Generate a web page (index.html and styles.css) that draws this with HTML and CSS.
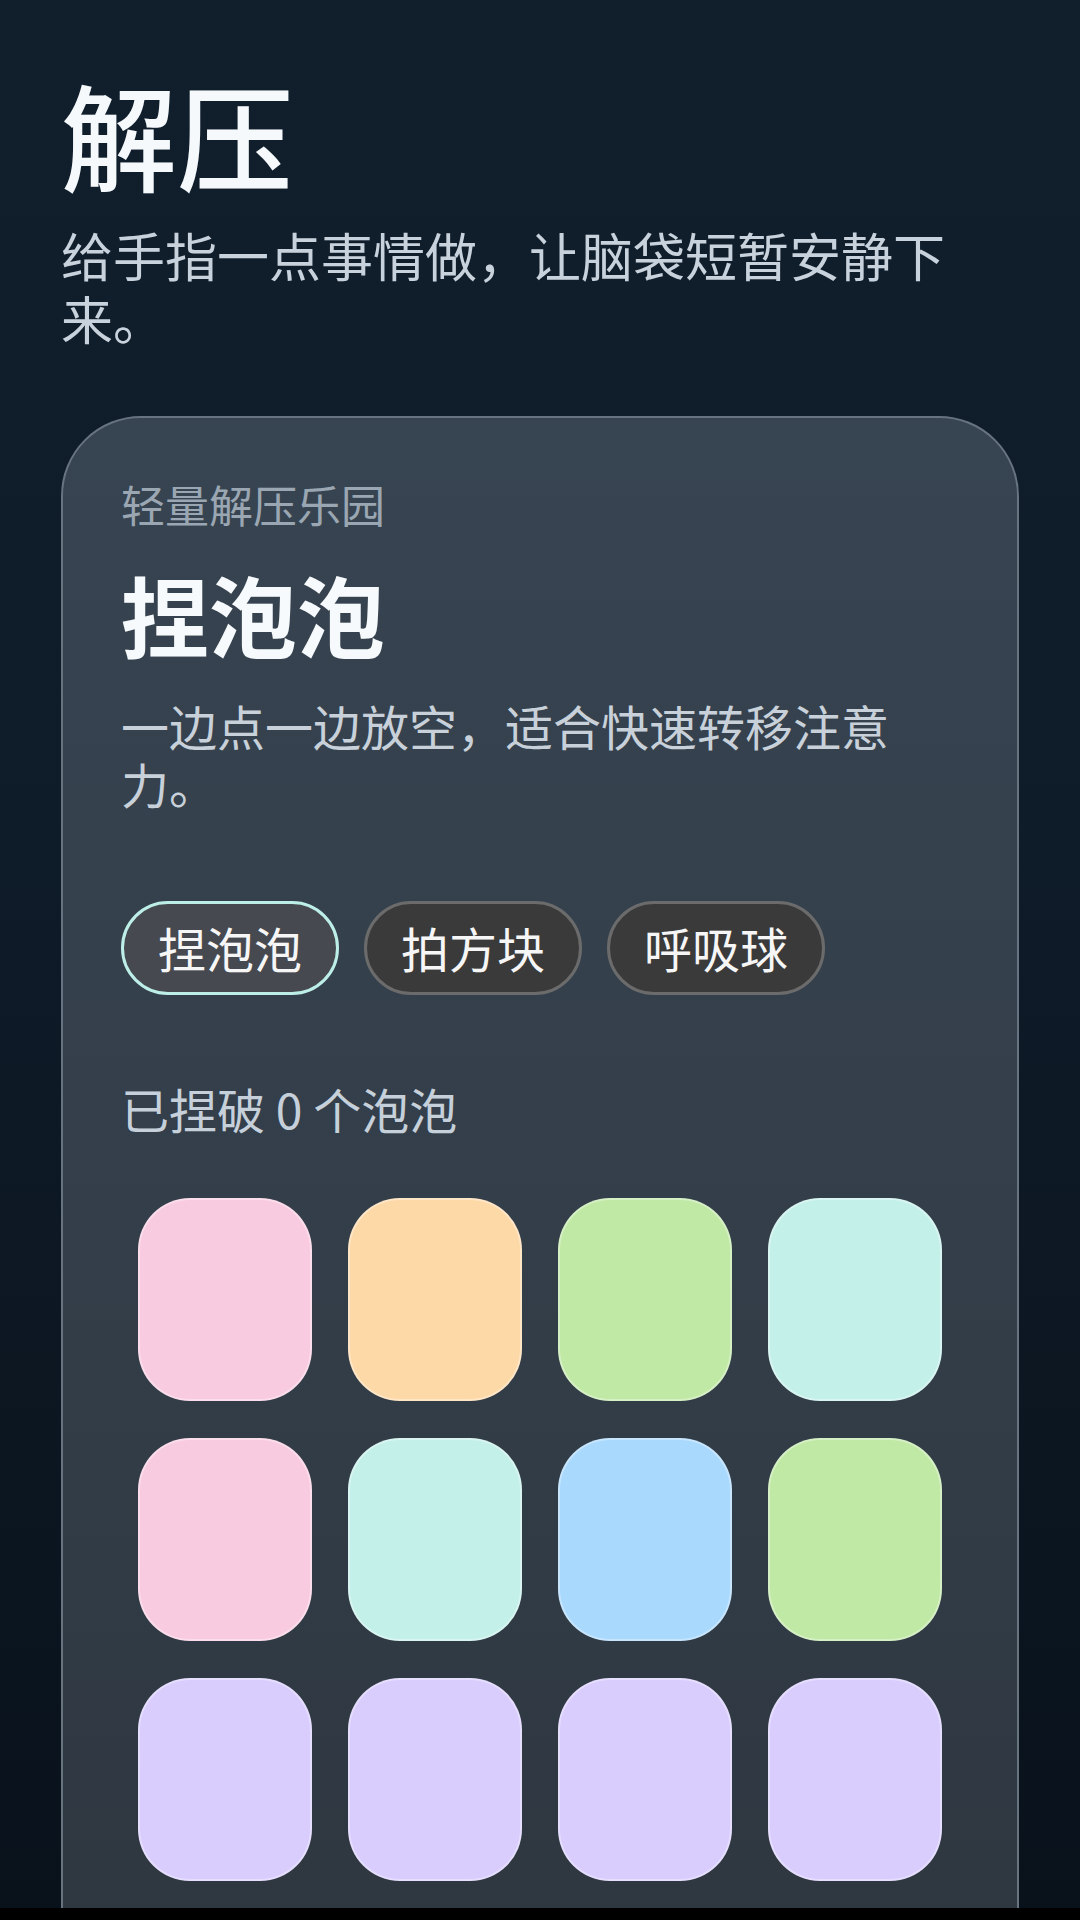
FILE: index.html
```html
<!DOCTYPE html>
<html lang="zh-CN">
<head>
<meta charset="utf-8">
<title>解压</title>
<link rel="stylesheet" href="styles.css">
</head>
<body>
<div class="screen">
  <header class="header">
    <h1 class="title">解压</h1>
    <p class="subtitle">给手指一点事情做，让脑袋短暂安静下来。</p>
  </header>
  <section class="card">
    <div class="label">轻量解压乐园</div>
    <h2 class="heading">捏泡泡</h2>
    <p class="desc">一边点一边放空，适合快速转移注意力。</p>
    <div class="tabs">
      <button class="tab tab-active">捏泡泡</button>
      <button class="tab">拍方块</button>
      <button class="tab">呼吸球</button>
    </div>
    <div class="counter">已捏破 0 个泡泡</div>
    <div class="grid">
      <div class="bubble pink"></div>
      <div class="bubble peach"></div>
      <div class="bubble green"></div>
      <div class="bubble mint"></div>
      <div class="bubble pink"></div>
      <div class="bubble mint"></div>
      <div class="bubble blue"></div>
      <div class="bubble green"></div>
      <div class="bubble lavender"></div>
      <div class="bubble lavender"></div>
      <div class="bubble lavender"></div>
      <div class="bubble lavender"></div>
    </div>
  </section>
</div>
</body>
</html>
```

FILE: styles.css
```css
html {
  background: #000;
}
body {
  margin: 0;
  font-family: "Noto Sans CJK SC", "Noto Sans", sans-serif;
}
.screen {
  height: 1908px;
  overflow: hidden;
  box-sizing: border-box;
  padding: 63px 61px 0;
  background: linear-gradient(180deg, #111f2d 0%, #0e1b28 45%, #09121b 100%);
}
.title {
  margin: 0;
  font-size: 116px;
  font-weight: 500;
  line-height: 1.2;
  color: #f5f9fc;
}
.subtitle {
  margin: 22px 0 0;
  max-width: 920px;
  font-size: 52px;
  line-height: 1.2;
  color: #c8d2dc;
}
.card {
  margin-top: 67px;
  border: 2px solid #67737f;
  border-radius: 80px;
  background: linear-gradient(180deg, #374451 0%, #323d48 55%, #2f3841 85%, #2e3740 100%);
  padding: 60px 58px 240px;
}
.label {
  font-size: 44px;
  line-height: 1.2;
  color: #9aa6b2;
}
.heading {
  margin: 29px 0 0;
  font-size: 88px;
  font-weight: 700;
  line-height: 1.2;
  color: #f7fafc;
}
.desc {
  margin: 32px 0 0;
  max-width: 800px;
  font-size: 48px;
  line-height: 1.2;
  color: #c8d1da;
}
.tabs {
  margin-top: 88px;
  display: flex;
  gap: 25px;
}
.tab {
  box-sizing: border-box;
  width: 218px;
  height: 94px;
  border-radius: 47px;
  border: 3px solid #6b6b6b;
  background: #3a3a3a;
  color: #f6f6f6;
  font-family: inherit;
  font-size: 48px;
  line-height: 1.2;
  padding: 0;
  display: flex;
  align-items: center;
  justify-content: center;
}
.tab-active {
  background: #46494f;
  border-color: #bdeee8;
}
.counter {
  margin-top: 85px;
  font-size: 48px;
  line-height: 1.2;
  color: #c6d0da;
}
.grid {
  margin-top: 61px;
  display: grid;
  grid-template-columns: repeat(4, 174px);
  grid-auto-rows: 203px;
  column-gap: 36px;
  row-gap: 37px;
  justify-content: center;
}
.bubble {
  box-sizing: border-box;
  border-radius: 52px;
  border: 2px solid rgba(255, 255, 255, 0.35);
}
.pink { background: #f9cbe0; }
.peach { background: #fed9a8; }
.green { background: #c1e9a6; }
.mint { background: #c4f0ea; }
.blue { background: #aad9fe; }
.lavender { background: #d9cdfe; }
```
